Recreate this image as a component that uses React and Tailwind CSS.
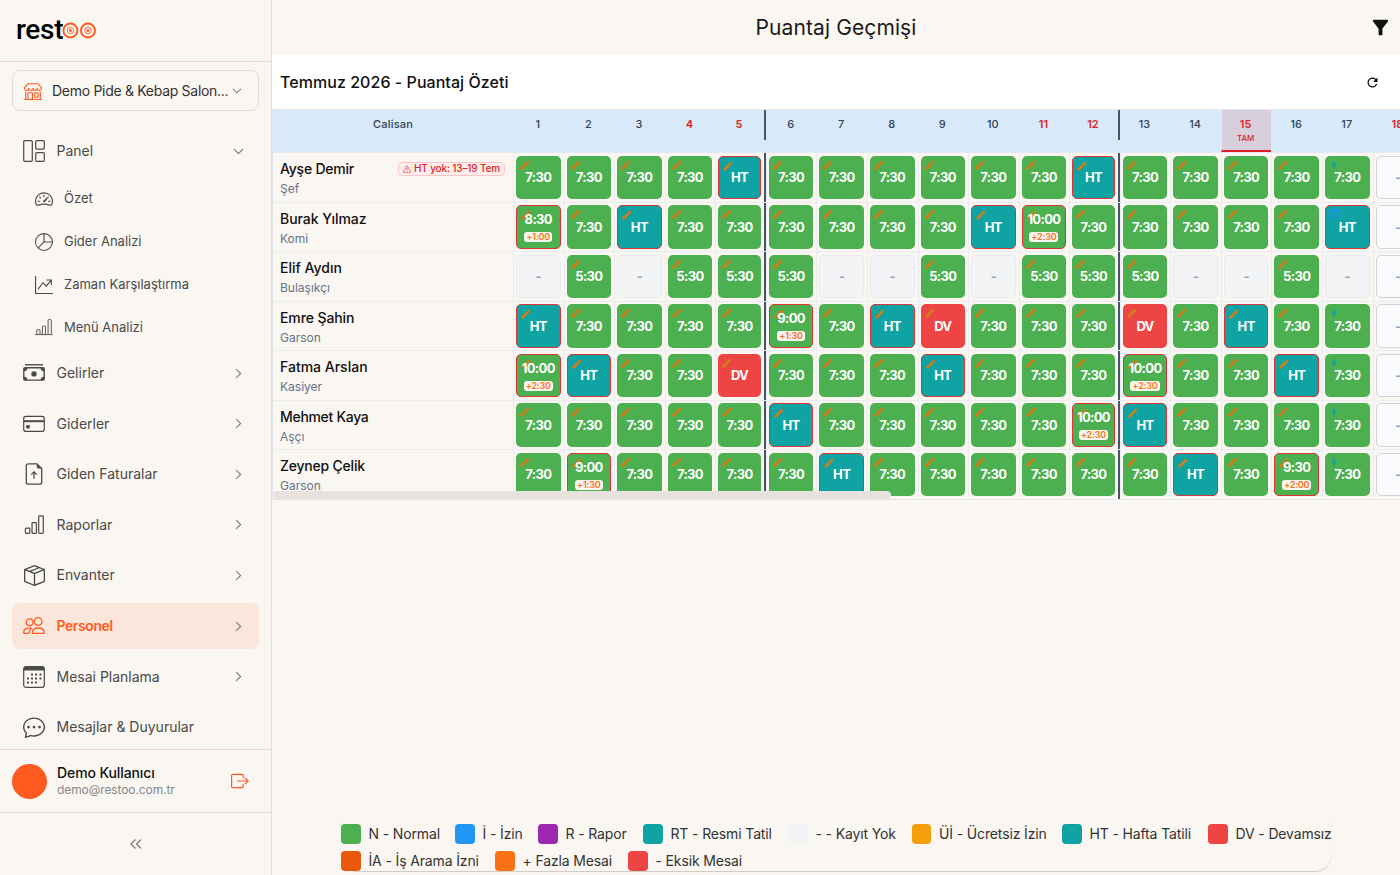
import {
  BsShop, BsChevronDown, BsChevronRight, BsSpeedometer2, BsPieChart, BsGraphUpArrow,
  BsBoxSeam, BsChatDots, BsExclamationTriangle, BsCalendarCheck,
} from 'react-icons/bs';
import { MdRefresh, MdFilterAlt } from 'react-icons/md';

const N = '7:30';

const employees = [
  { name: 'Ayşe Demir', role: 'Şef', warning: 'HT yok: 13–19 Tem', nameCls: 'tracking-[-0.016em]', days: [N, N, N, N, 'HT', N, N, N, N, N, N, 'HT', N, N, N, N, N, '?'] },
  { name: 'Burak Yılmaz', role: 'Komi', nameCls: 'tracking-[-0.004em]', days: ['8:30+1:00', N, 'HT', N, N, N, N, N, N, 'HT', '10:00+2:30', N, N, N, N, N, 'HT', '?'] },
  { name: 'Elif Aydın', role: 'Bulaşıkçı', nameCls: 'tracking-normal', days: ['-', '5:30', '-', '5:30', '5:30', '5:30', '-', '-', '5:30', '-', '5:30', '5:30', '5:30', '-', '-', '5:30', '-', '?'] },
  { name: 'Emre Şahin', role: 'Garson', nameCls: 'tracking-[-0.007em]', days: ['HT', N, N, N, N, '9:00+1:30', N, 'HT', 'DV', N, N, N, 'DV', N, 'HT', N, N, '?'] },
  { name: 'Fatma Arslan', role: 'Kasiyer', nameCls: 'tracking-normal', days: ['10:00+2:30', 'HT', N, N, 'DV', N, N, N, 'HT', N, N, N, '10:00+2:30', N, N, 'HT', N, '?'] },
  { name: 'Mehmet Kaya', role: 'Aşçı', nameCls: 'tracking-[-0.022em]', days: [N, N, N, N, N, 'HT', N, N, N, N, N, '10:00+2:30', 'HT', N, N, N, N, '?'] },
  { name: 'Zeynep Çelik', role: 'Garson', nameCls: 'tracking-[-0.015em]', days: [N, '9:00+1:30', N, N, N, N, 'HT', N, N, N, N, N, N, 'HT', N, '9:30+2:00', N, '?'] },
];

const legend = [
  [
    { label: 'N - Normal', color: 'bg-[#4caf50]', w: 'w-[114px]' },
    { label: 'İ - İzin', color: 'bg-[#2196f3]', w: 'w-[83px]' },
    { label: 'R - Rapor', color: 'bg-[#9c27b0]', w: 'w-[105px]' },
    { label: 'RT - Resmi Tatil', color: 'bg-[#0fa3a3]', w: 'w-[145px]' },
    { label: '- - Kayıt Yok', color: 'bg-[#f3f4f6]', w: 'w-[123.5px]' },
    { label: 'Üİ - Ücretsiz İzin', color: 'bg-[#f59e0b]', w: 'w-[150.5px]' },
    { label: 'HT - Hafta Tatili', color: 'bg-[#0fa3a3]', w: 'w-[146px]' },
    { label: 'DV - Devamsız', color: 'bg-[#ef4444]', w: 'w-[123px]' },
  ],
  [
    { label: 'İA - İş Arama İzni', color: 'bg-[#ea580c]', w: 'w-[154px]' },
    { label: '+ Fazla Mesai', color: 'bg-[#f97316]', w: 'w-[133px]' },
    { label: '- Eksik Mesai', color: 'bg-[#ef4444]', w: 'w-[123px]' },
  ],
];

function PanelIcon() {
  return (
    <svg viewBox="0 0 22 22" className="size-[22px]" fill="none" stroke="currentColor" strokeWidth="1.2">
      <rect x="0.7" y="0.7" width="8.6" height="20.6" rx="1" />
      <rect x="12.7" y="0.7" width="8.6" height="8.4" rx="1" />
      <rect x="12.7" y="12.6" width="8.6" height="8.7" rx="1" />
    </svg>
  );
}

function CashIcon() {
  return (
    <svg viewBox="0 0 22 22" className="size-[22px]" fill="none" stroke="currentColor" strokeWidth="1.4">
      <path d="M2 2.8h18" />
      <rect x="0.8" y="5.7" width="20.4" height="12.4" rx="1.2" />
      <circle cx="11" cy="11.9" r="2.7" fill="currentColor" stroke="none" />
      <path d="M1 9.2A3.4 3.4 0 0 0 4.4 6H1zM21 9.2A3.4 3.4 0 0 1 17.6 6H21zM1 14.8A3.4 3.4 0 0 1 4.4 18H1zM21 14.8A3.4 3.4 0 0 0 17.6 18H21z" fill="currentColor" stroke="none" />
    </svg>
  );
}

function CardIcon() {
  return (
    <svg viewBox="0 0 22 22" className="size-[22px]" fill="none" stroke="currentColor" strokeWidth="1.2">
      <rect x="0.7" y="3.4" width="20.6" height="15" rx="2.2" />
      <path d="M1 8.2h20" strokeWidth="2" />
      <rect x="3.2" y="12" width="3.6" height="3.4" rx="1" fill="currentColor" stroke="none" />
    </svg>
  );
}

function InvoiceIcon() {
  return (
    <svg viewBox="0 0 22 22" className="size-[22px]" fill="none" stroke="currentColor" strokeWidth="1.3">
      <path d="M14 .8H5.3a2 2 0 0 0-2 2v16.4a2 2 0 0 0 2 2h11.4a2 2 0 0 0 2-2V5.5z" />
      <path d="M13.8.8v3.2a1.6 1.6 0 0 0 1.6 1.6h3.2z" fill="currentColor" stroke="none" />
      <path d="M11 15.8V9M8.2 11.6 11 8.8l2.8 2.8" strokeWidth="1.2" />
    </svg>
  );
}

function BarsIcon() {
  return (
    <svg viewBox="0 0 22 22" className="size-[22px]" fill="none" stroke="currentColor" strokeWidth="1.2">
      <rect x="2.4" y="14.2" width="4.4" height="5.2" rx="0.8" />
      <rect x="9" y="8.6" width="4.4" height="10.8" rx="0.8" />
      <rect x="15.7" y="1.8" width="4.6" height="17.6" rx="0.8" />
    </svg>
  );
}

function ChartLineIcon() {
  return (
    <svg viewBox="0 0 18 18" className="size-[18px]" fill="none" stroke="currentColor" strokeWidth="0.9">
      <path d="M0.3 16.6h17.4" />
      <path d="M1.8 16.4v-4.2q0-.5.5-.5h2.2q.5 0 .5.5v4.2M7.4 16.4V8.5q0-.5.5-.5H10q.5 0 .5.5v7.9M13.1 16.4V2.4q0-.8.8-.8h1.6q.8 0 .8.8v14" />
    </svg>
  );
}

function PeopleIcon() {
  return (
    <svg viewBox="0 0 22 22" className="size-[22px]" fill="none" stroke="currentColor" strokeWidth="1.3" strokeLinejoin="round">
      <circle cx="6.6" cy="7.3" r="3.4" />
      <circle cx="15.2" cy="6.5" r="3.8" />
      <path d="M9.2 17.9c0-3.2 2.6-4.9 6-4.9s6 1.7 6 4.9q0 .4-.5.4H9.7q-.5 0-.5-.4z" />
      <path d="M6.2 18.3H1.3q-.6 0-.6-.5c0-3 2.4-4.7 5.6-4.7h2.1" />
      <path d="M6.2 18.3c0-2.2.8-3.9 2.4-5.2" />
    </svg>
  );
}

function CalendarIcon() {
  const dots = [[9, 8.5], [13, 8.5], [17.5, 8.5], [5, 12.5], [9, 12.5], [13, 12.5], [17.5, 12.5], [5, 16.5], [9, 16.5], [13, 16.5]];
  return (
    <svg viewBox="0 0 22 22" className="size-[22px]" fill="none" stroke="currentColor" strokeWidth="1.2">
      <rect x="0.7" y="0.7" width="20.6" height="20.6" rx="2.4" />
      <path d="M.6 4.6V2.8A2.2 2.2 0 0 1 2.8.6h16.4a2.2 2.2 0 0 1 2.2 2.2v1.8z" fill="currentColor" stroke="none" />
      {dots.map(([x, y]) => (
        <rect key={`${x}-${y}`} x={x - 1} y={y - 1} width="2" height="2" rx="0.5" fill="currentColor" stroke="none" />
      ))}
    </svg>
  );
}

function LogoutIcon() {
  return (
    <svg viewBox="0 0 18 18" className="size-[18px]" fill="none" stroke="currentColor" strokeWidth="1.2">
      <path d="M12.2 6.2V3.6a1.2 1.2 0 0 0-1.2-1.2H1.8A1.2 1.2 0 0 0 .6 3.6v10.8a1.2 1.2 0 0 0 1.2 1.2H11a1.2 1.2 0 0 0 1.2-1.2v-2.6" />
      <path d="M6 9h11.2M14 5.8 17.2 9 14 12.2" />
    </svg>
  );
}

function PencilMark() {
  return (
    <svg viewBox="0 0 10 10" className="absolute left-[4px] top-[4px] size-[10px]" fill="none">
      <path d="M.8 9.2 8.6 1.4" stroke="#d97a17" strokeWidth="2.7" />
      <path d="M2.4 7.6 8 2" stroke="#7f9a38" strokeWidth="0.9" strokeDasharray="1.1 1.1" />
    </svg>
  );
}

function BoltMark() {
  return (
    <svg viewBox="0 0 10 10" className="absolute left-[4px] top-[4px] size-[10px]" fill="#0fa3a3">
      <path d="M6.4 0 2.2 5.6h2.2L3.8 10l4.2-5.8H5.8z" />
    </svg>
  );
}

function Logo() {
  return (
    <div className="flex h-[61px] items-center pl-4">
      <span className="-mt-px font-[Roboto] text-[28px] font-medium leading-8 tracking-[-0.01em] text-black">rest</span>
      <svg viewBox="0 0 34 17" className="-ml-px h-[17px] w-[34px]" fill="none" stroke="#ff5a1f">
        {[8.4, 26].map((cx) => (
          <g key={cx}>
            <circle cx={cx} cy="8.5" r="7" strokeWidth="1.9" />
            <circle cx={cx} cy="8.5" r="3.2" strokeWidth="0.9" />
            <circle cx={cx} cy="8.5" r="1.4" fill="#ff5a1f" stroke="none" />
          </g>
        ))}
      </svg>
    </div>
  );
}

function NavItem({ icon, label, active, chevron = 'right' }) {
  return (
    <div className={`mb-1 flex h-[46.6px] shrink-0 items-center rounded-lg px-[11px] ${active ? 'bg-[#fbe6db] text-[#ff5a1f]' : 'text-[#4a4a4a]'}`}>
      <span className="flex w-[22px] justify-center">{icon}</span>
      <span className={`ml-[11.5px] flex-1 whitespace-nowrap text-sm ${active ? 'font-semibold tracking-[-0.03em]' : ''}`}>{label}</span>
      {chevron === 'right' && <BsChevronRight className="mr-[4px] size-[11px] text-[#666]" strokeWidth="0.6" />}
      {chevron === 'down' && <BsChevronDown className="mr-[4px] size-[11px] text-[#666]" strokeWidth="0.6" />}
    </div>
  );
}

function SubItem({ icon, label }) {
  return (
    <div className="flex h-[42.8px] shrink-0 items-center pl-[23px] text-[#4a4a4a]">
      {icon}
      <span className="ml-[11px] whitespace-nowrap text-[13px]">{label}</span>
    </div>
  );
}

function Sidebar() {
  return (
    <aside className="flex h-full w-[272px] shrink-0 flex-col border-r border-[#e1ded9] bg-[#faf6f1]">
      <Logo />
      <div className="border-t border-[#e1ded9] px-3 pt-2">
        <div className="flex h-[41px] items-center rounded-lg border border-[#e1ded9] pl-[11px] pr-4">
          <BsShop className="size-[18px] shrink-0 text-[#ff5a1f]" />
          <span className="ml-[10px] flex-1 whitespace-nowrap text-sm tracking-[-0.021em] text-[#333]">Demo Pide &amp; Kebap Salon...</span>
          <BsChevronDown className="size-[10px] shrink-0 text-[#666]" strokeWidth="0.6" />
        </div>
      </div>
      <nav className="flex min-h-0 flex-1 flex-col overflow-hidden px-3 pt-[17px]">
        <NavItem icon={<PanelIcon />} label="Panel" chevron="down" />
        <div className="-mt-px mb-[1px] shrink-0">
          <SubItem icon={<BsSpeedometer2 className="size-[18px]" />} label="Özet" />
          <SubItem icon={<BsPieChart className="size-[18px]" />} label="Gider Analizi" />
          <SubItem icon={<BsGraphUpArrow className="size-[18px]" />} label="Zaman Karşılaştırma" />
          <SubItem icon={<ChartLineIcon />} label="Menü Analizi" />
        </div>
        <NavItem icon={<CashIcon />} label="Gelirler" />
        <NavItem icon={<CardIcon />} label="Giderler" />
        <NavItem icon={<InvoiceIcon />} label="Giden Faturalar" />
        <NavItem icon={<BarsIcon />} label="Raporlar" />
        <NavItem icon={<BsBoxSeam className="size-[21px]" />} label="Envanter" />
        <NavItem icon={<PeopleIcon />} label="Personel" active />
        <NavItem icon={<CalendarIcon />} label="Mesai Planlama" />
        <NavItem icon={<BsChatDots className="size-[22px]" />} label="Mesajlar &amp; Duyurular" chevron="none" />
      </nav>
      <div className="flex h-[63px] shrink-0 items-center border-t border-[#e1ded9] px-3">
        <span className="size-[35px] rounded-full bg-[#ff5a1f]" />
        <div className="ml-[10px] flex-1">
          <p className="text-sm font-medium leading-[17px] tracking-[-0.007em] text-[#111]">Demo Kullanıcı</p>
          <p className="text-xs leading-[17px] tracking-[-0.008em] text-[#888]">demo@restoo.com.tr</p>
        </div>
        <span className="mr-[10px] text-[#ff5a1f]"><LogoutIcon /></span>
      </div>
      <div className="flex h-[63px] shrink-0 items-center justify-center border-t border-[#e1ded9]">
        <svg viewBox="0 0 12 10" className="h-[10px] w-3" fill="none" stroke="#777" strokeWidth="1.2">
          <path d="M5.5.5 1 5l4.5 4.5M11 .5 6.5 5 11 9.5" />
        </svg>
      </div>
    </aside>
  );
}

function DayCell({ value, day }) {
  const [text, extra] = value.split('+');
  const weekEnd = day === 5 || day === 12;

  let box = 'bg-[#4caf50] text-white';
  if (text === 'HT') box = 'bg-[#0fa3a3] text-white border border-[#dc3535]';
  if (text === 'DV') box = 'bg-[#ef4444] text-white';
  if (text === '-') box = 'bg-[#f3f4f6] text-[#9ca3af] border border-[#e9ebee]';
  if (text === '?') box = 'bg-[#f9fafb] text-[#94a3b8] border border-[#d1d5db]';
  if (extra) box = 'bg-[#4caf50] text-white border border-[#dc3535]';
  const bordered = box.includes('border');

  let mark = <PencilMark />;
  if (day === 17) mark = text === 'HT' ? <BsCalendarCheck className="absolute left-[4px] top-[3px] size-[10px] text-[#2490ee]" strokeWidth="0.8" /> : <BoltMark />;
  if (text === '-' || text === '?') mark = null;

  return (
    <div className={`flex w-[50.57px] shrink-0 border-l border-[#e9ecf1] pb-[2.5px] pl-[2px] pr-[3px] pt-[2.5px] ${weekEnd ? 'border-r-2 border-r-[#475569]' : ''}`}>
      <div className={`relative flex flex-1 flex-col items-center justify-center rounded-[5px] text-[13px] font-bold tracking-[-0.05em] ${box}`}>
        {mark}
        <span className={`relative leading-[15px] ${extra ? '' : bordered ? 'top-[0.5px]' : 'top-[0.5px]'}`}>{text === '?' ? '-' : text}</span>
        {extra && <span className="mt-[5px] -mb-px rounded-[3px] bg-[#faf6f1] px-[2px] text-[9px] font-semibold leading-[10px] tracking-[-0.02em] text-[#f97316]">+{extra}</span>}
      </div>
    </div>
  );
}

function Timesheet() {
  const days = Array.from({ length: 18 }, (_, i) => i + 1);
  const red = [4, 5, 11, 12, 15, 18];
  return (
    <div className="relative h-[391px] overflow-hidden border-b border-l border-[#e1e6ee]">
      <div className="flex h-[44px] w-max border-b border-t border-[#e4e9f0] bg-[#d8eafa] text-[11px] font-medium text-[#334155]">
        <div className="w-[240px] shrink-0 pt-[6px] text-center leading-4 tracking-[0.02em]">Calisan</div>
        {days.map((d) => (
          <div key={d} className={`w-[50.57px] shrink-0 border-l border-[#dfe8f2] ${d === 15 ? 'border-b-2 border-b-[#dc1f26] bg-[#d8cfdd]' : ''}`}>
            <div className={`h-[30px] pr-[2px] pt-[6px] text-center leading-4 ${d === 5 || d === 12 ? 'border-r-2 border-[#475569]' : ''} ${red.includes(d) ? 'font-semibold text-[#dc2626]' : ''}`}>
              {d}
              {d === 15 && <div className="pt-px text-[8px] font-medium leading-[11px]">TAM</div>}
            </div>
          </div>
        ))}
      </div>
      {employees.map((e) => (
        <div key={e.name} className="flex h-[49.5px] w-max border-b-[1.5px] border-[#e9ecf1]">
          <div className="w-[240px] shrink-0 pl-[7px] pr-2 pt-[6px]">
            <div className="flex items-center justify-between">
              <span className={`text-sm font-medium leading-[19px] text-[#111] ${e.nameCls}`}>{e.name}</span>
              {e.warning && (
                <span className="flex h-[14px] items-center gap-[3px] rounded-[4px] border border-[#fbc5c5] bg-[#fdeeee] px-1 text-[10px] font-medium tracking-[-0.015em] text-[#dc2626]">
                  <BsExclamationTriangle className="size-[8px]" />
                  {e.warning}
                </span>
              )}
            </div>
            <p className="pt-px text-xs leading-5 text-[#64748b]">{e.role}</p>
          </div>
          {e.days.map((v, i) => <DayCell key={i} value={v} day={i + 1} />)}
        </div>
      ))}
      <div className="absolute bottom-0 left-0 h-2 w-[618px] rounded-full bg-[#e7e2dd]" />
    </div>
  );
}

function Legend() {
  return (
    <div className="mb-1 ml-[69px] flex h-[55px] w-[990px] flex-col justify-between rounded-b-2xl pt-2 shadow-[0_1px_1px_rgba(0,0,0,0.18)]">
      {legend.map((row, i) => (
        <div key={i} className="flex">
          {row.map((item) => (
            <div key={item.label} className={`flex h-5 shrink-0 items-center whitespace-nowrap text-sm tracking-[-0.01em] text-[#333] ${item.w}`}>
              <span className={`mr-2 h-5 w-[19.5px] shrink-0 rounded-[4px] ${item.color}`} />
              {item.label}
            </div>
          ))}
        </div>
      ))}
    </div>
  );
}

export default function App() {
  return (
    <div className="flex h-[875px] w-[1400px] overflow-hidden bg-[#faf6f1] font-[Inter,sans-serif]">
      <Sidebar />
      <main className="flex min-w-0 flex-1 flex-col">
        <header className="flex h-[55px] shrink-0 items-center justify-end pr-2">
          <h1 className="flex-1 pl-[31px] text-center text-[21px] tracking-[0.005em] text-[#1a1a1a]">Puantaj Geçmişi</h1>
          <MdFilterAlt className="size-[23px] text-[#111]" />
        </header>
        <div className="flex h-[54px] shrink-0 items-center justify-between bg-white pl-2 pr-5">
          <h2 className="text-base font-medium tracking-[0.003em] text-[#111]">Temmuz 2026 - Puantaj Özeti</h2>
          <MdRefresh className="size-[15px] text-[#111]" />
        </div>
        <Timesheet />
        <div className="flex-1" />
        <Legend />
      </main>
    </div>
  );
}
